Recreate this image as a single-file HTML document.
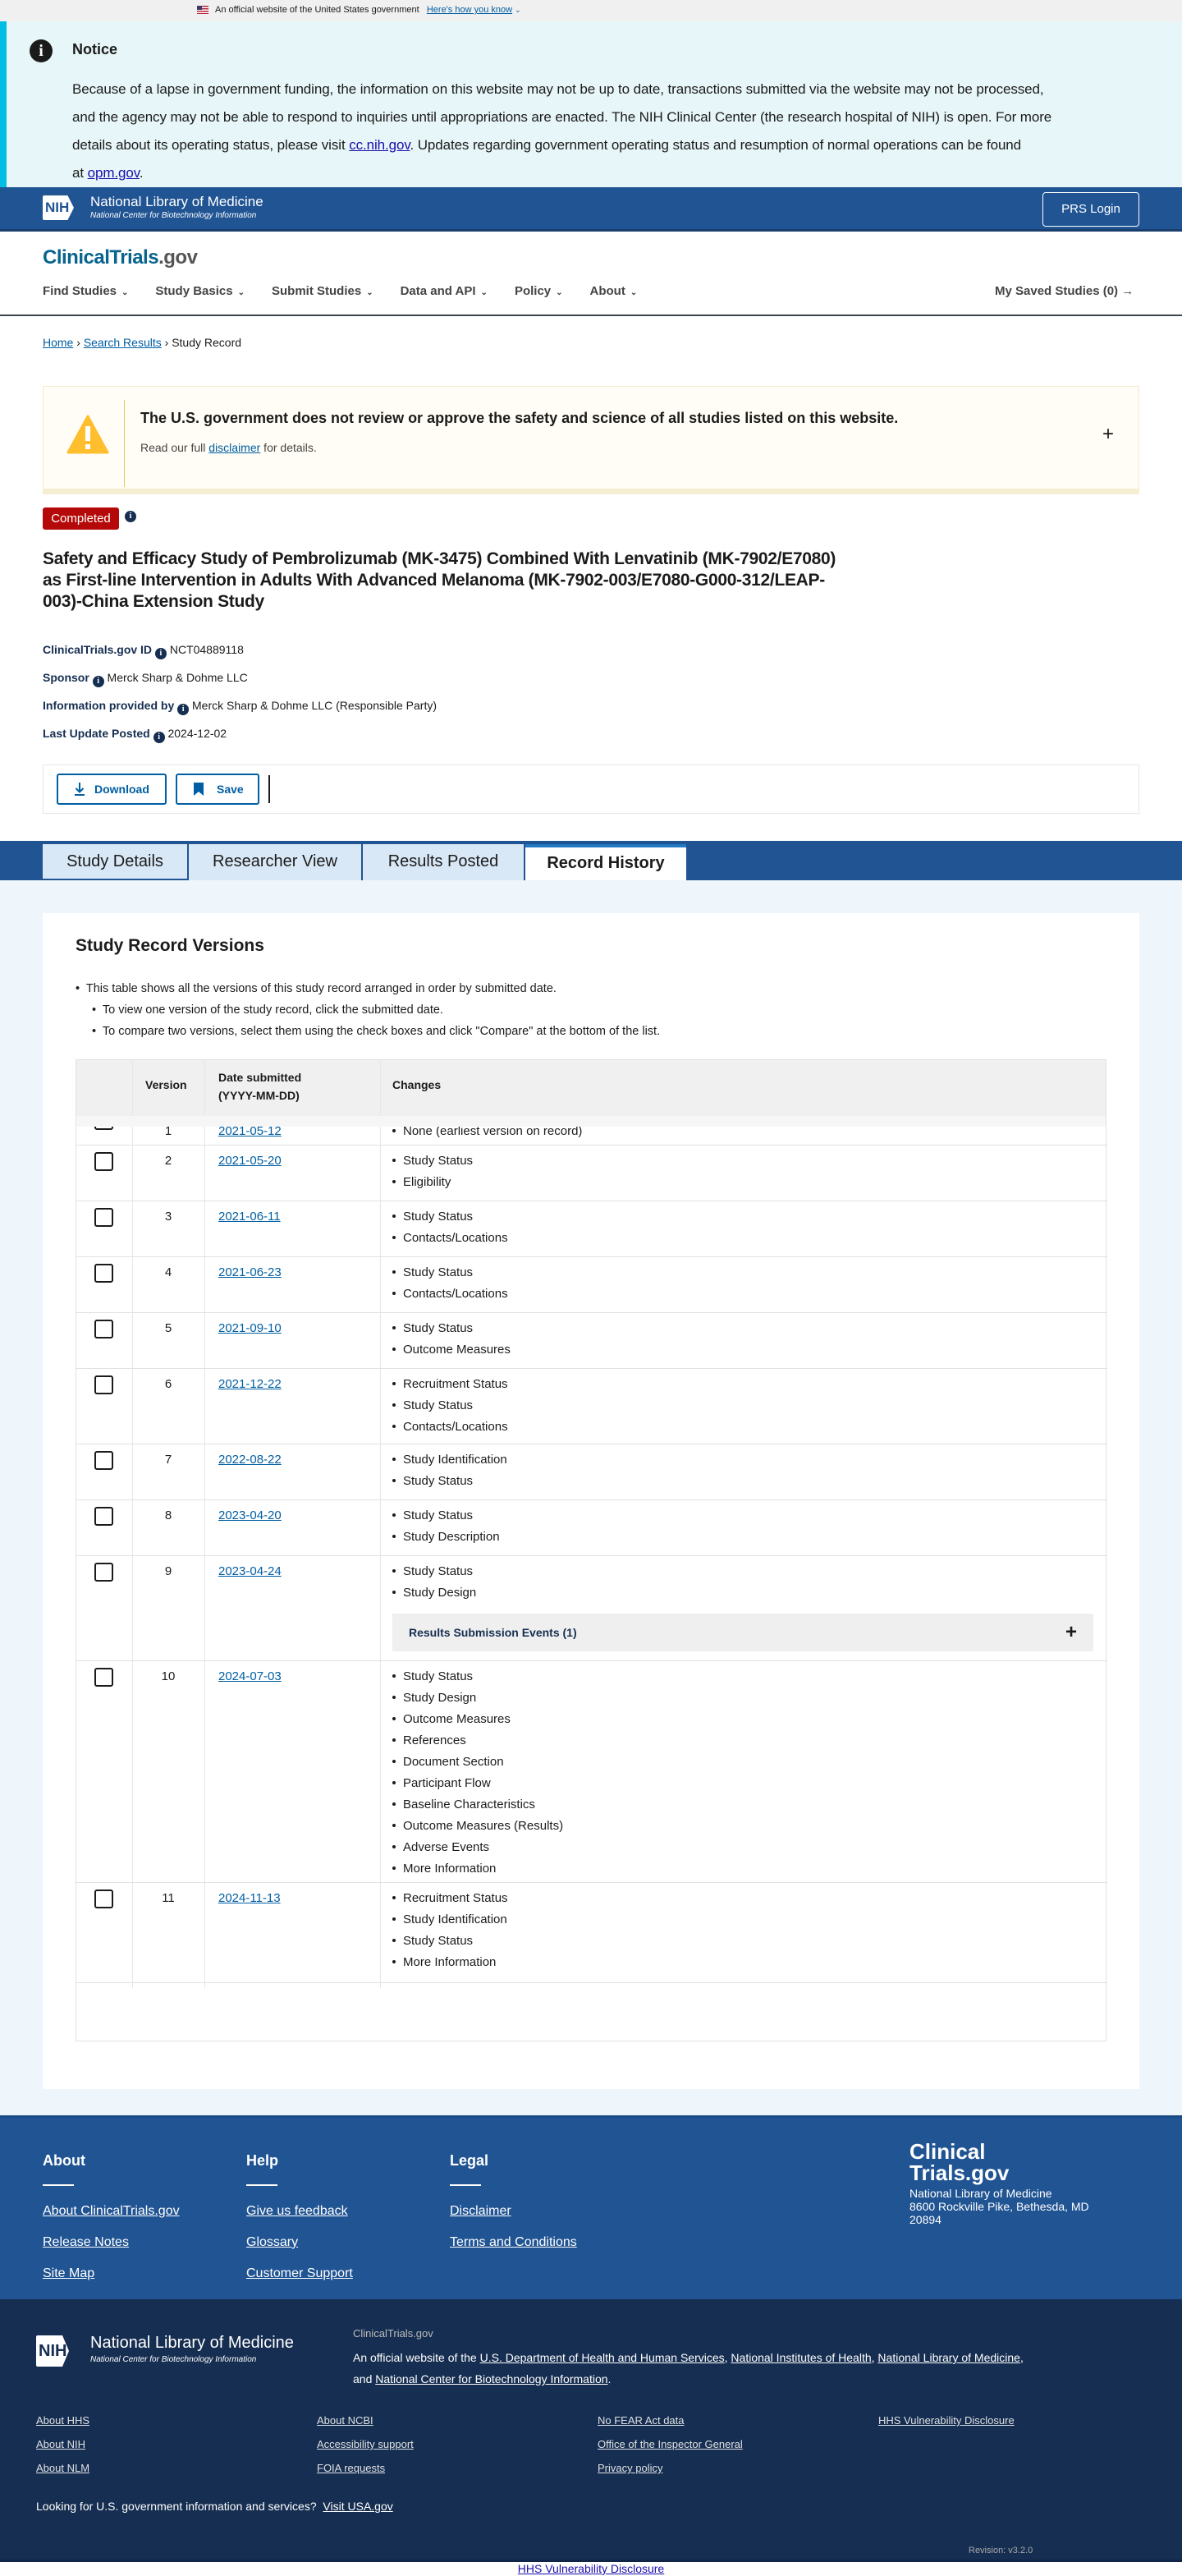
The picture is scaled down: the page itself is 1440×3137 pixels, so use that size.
<!DOCTYPE html>
<html><head><meta charset="utf-8">
<style>
*{box-sizing:border-box;margin:0;padding:0}
body{width:1440px;height:3137px;position:relative;font-family:"Liberation Sans",Arial,sans-serif;color:#1b1b1b;background:#fff;overflow:hidden}
a{color:#005ea2}
.abs{position:absolute}
.info{display:inline-block;width:14px;height:14px;border-radius:50%;background:#162e51;color:#fff;font-size:10px;font-weight:bold;text-align:center;line-height:14px;vertical-align:-2px;font-family:"Liberation Serif",serif}
.nav span{margin-right:33px}
.chev{font-size:10px;margin-left:6px}
.tbl{position:absolute;left:92px;top:1290px;width:1256px;border:1px solid #dfe1e2;}
.row{position:absolute;left:0;width:1256px;border-bottom:1px solid #dfe1e2;font-size:15px}
.row .cb{position:absolute;left:22px;top:8px;width:23px;height:23px;border:2px solid #1b1b1b;border-radius:3px;background:#fff}
.row .v{position:absolute;left:68px;width:88px;text-align:center;top:10px}
.row .d{position:absolute;left:173px;top:10px;color:#005ea2;text-decoration:underline}
.row ul{position:absolute;left:385px;top:10px;list-style:none}
.row li{height:26px;line-height:18px}
.row li:before{content:"";display:inline-block;width:4px;height:4px;background:#1b1b1b;border-radius:50%;margin:0 9px 3px 0}
.vl{position:absolute;top:0;bottom:0;width:1px;background:#e6e6e6}
.ft a{color:#fff;display:block;font-size:16px;margin-bottom:20px}
.fb a{color:#dfe1e2;display:block;font-size:13px;margin-bottom:14px}
</style></head><body>

<div class="abs" style="left:0;top:0;width:1440px;height:26px;background:#f0f0f0;font-size:11px;">
 <div class="abs" style="left:240px;top:7px;width:14px;height:10px;background:repeating-linear-gradient(#b22234 0 1.5px,#fff 1.5px 3px)"><div style="width:6px;height:5px;background:#3c3b6e"></div></div>
 <div class="abs" style="left:262px;top:6px;">An official website of the United States government&nbsp;&nbsp; <a style="color:#005ea2;text-decoration:underline">Here's how you know</a> <span style="color:#005ea2;font-size:9px">⌄</span></div>
</div>

<div class="abs" style="left:0;top:26px;width:1440px;height:202px;background:#e7f6f8;border-left:8px solid #00bde3">
 <div class="abs" style="left:28px;top:22px;width:28px;height:28px;border-radius:50%;background:#1b1b1b;color:#fff;text-align:center;font:bold 20px/28px 'Liberation Serif',serif">i</div>
 <div class="abs" style="left:80px;top:24px;font-size:18px;font-weight:bold">Notice</div>
 <div class="abs" style="left:80px;top:66px;width:1340px;font-size:17px;line-height:34px;white-space:nowrap;letter-spacing:-0.1px;color:#1b1b1b">Because of a lapse in government funding, the information on this website may not be up to date, transactions submitted via the website may not be processed,<br>and the agency may not be able to respond to inquiries until appropriations are enacted. The NIH Clinical Center (the research hospital of NIH) is open. For more<br>details about its operating status, please visit <a style="color:#1a0dab;text-decoration:underline">cc.nih.gov</a>. Updates regarding government operating status and resumption of normal operations can be found<br>at <a style="color:#1a0dab;text-decoration:underline">opm.gov</a>.</div>
</div>

<div class="abs" style="left:0;top:228px;width:1440px;height:54px;background:#205493;border-bottom:3px solid #1a3f6e;">
 <div class="abs" style="left:52px;top:10px;width:38px;height:30px;background:#fff;border-radius:2px;color:#205493;font:bold 17px/30px 'Liberation Sans';padding-left:3px;clip-path:polygon(0 0,80% 0,100% 50%,80% 100%,0 100%)">NIH</div>
 <div class="abs" style="left:110px;top:8px;color:#fff;font-size:17px;">National Library of Medicine</div>
 <div class="abs" style="left:110px;top:29px;color:#fff;font-size:10px;font-style:italic">National Center for Biotechnology Information</div>
 <div class="abs" style="left:1270px;top:6px;width:118px;height:42px;border:1px solid #fff;border-radius:4px;color:#fff;font-size:15px;text-align:center;line-height:40px">PRS Login</div>
</div>

<div class="abs" style="left:52px;top:300px;font-size:24px;font-weight:bold;color:#07648d;letter-spacing:-0.5px">ClinicalTrials<span style="color:#555;font-weight:bold">.gov</span></div>
<div class="abs nav" style="left:52px;top:346px;font-size:15px;font-weight:bold;color:#444">
 <span>Find Studies<b class="chev">⌄</b></span><span>Study Basics<b class="chev">⌄</b></span><span>Submit Studies<b class="chev">⌄</b></span><span>Data and API<b class="chev">⌄</b></span><span>Policy<b class="chev">⌄</b></span><span>About<b class="chev">⌄</b></span>
</div>
<div class="abs" style="left:1212px;top:346px;font-size:15px;font-weight:bold;color:#444">My Saved Studies (0) →</div>
<div class="abs" style="left:0;top:383px;width:1440px;height:2px;background:#3d4551"></div>

<div class="abs" style="left:52px;top:409px;font-size:14px"><a style="text-decoration:underline">Home</a> › <a style="text-decoration:underline">Search Results</a> › Study Record</div>

<div class="abs" style="left:52px;top:470px;width:1336px;height:132px;background:#fffdf5;border:1px solid #f3ecd0;border-bottom:7px solid #f5eed3">
 <svg class="abs" style="left:28px;top:34px" width="52" height="48" viewBox="0 0 52 48"><path d="M26 2 L50 46 L2 46 Z" fill="#ffbe2e" stroke="#ffbe2e" stroke-width="3" stroke-linejoin="round"/><rect x="23" y="14" width="6" height="18" fill="#fff"/><rect x="23" y="36" width="6" height="6" fill="#fff"/></svg>
 <div class="abs" style="left:98px;top:16px;width:1px;height:106px;background:#e5c85e"></div>
 <div class="abs" style="left:118px;top:28px;font-size:18px;font-weight:bold">The U.S. government does not review or approve the safety and science of all studies listed on this website.</div>
 <div class="abs" style="left:118px;top:66px;font-size:14px;color:#444">Read our full <a style="text-decoration:underline">disclaimer</a> for details.</div>
 <div class="abs" style="left:1290px;top:44px;font-size:24px">+</div>
</div>

<div class="abs" style="left:52px;top:618px;width:93px;height:27px;background:#b50909;color:#fff;border-radius:3px;font-size:15px;text-align:center;line-height:27px">Completed</div>
<span class="abs info" style="left:152px;top:622px">i</span>
<div class="abs" style="left:52px;top:668px;width:1080px;font-size:21px;font-weight:bold;line-height:26px;letter-spacing:-0.3px;color:#1b1b1b">Safety and Efficacy Study of Pembrolizumab (MK-3475) Combined With Lenvatinib (MK-7902/E7080)<br>as First-line Intervention in Adults With Advanced Melanoma (MK-7902-003/E7080-G000-312/LEAP-<br>003)-China Extension Study</div>
<div class="abs" style="left:52px;top:774px;font-size:14px;line-height:34px">
 <div><b style="color:#162e51">ClinicalTrials.gov ID</b> <span class="info">i</span> NCT04889118</div>
 <div><b style="color:#162e51">Sponsor</b> <span class="info">i</span> Merck Sharp &amp; Dohme LLC</div>
 <div><b style="color:#162e51">Information provided by</b> <span class="info">i</span> Merck Sharp &amp; Dohme LLC (Responsible Party)</div>
 <div><b style="color:#162e51">Last Update Posted</b> <span class="info">i</span> 2024-12-02</div>
</div>

<div class="abs" style="left:52px;top:931px;width:1336px;height:60px;border:1px solid #e6e6e6">
 <div class="abs" style="left:16px;top:10px;width:134px;height:38px;border:2px solid #005ea2;border-radius:3px;color:#005ea2;font-size:14px;font-weight:bold;line-height:34px;padding-left:44px">Download<svg class="abs" style="left:20px;top:9px" width="12" height="16" viewBox="0 0 12 16"><path d="M6 0V11M1.5 7L6 11.5L10.5 7M0 15H12" stroke="#005ea2" stroke-width="2" fill="none"/></svg></div>
 <div class="abs" style="left:161px;top:10px;width:102px;height:38px;border:2px solid #005ea2;border-radius:3px;color:#005ea2;font-size:14px;font-weight:bold;line-height:34px;padding-left:48px">Save<svg class="abs" style="left:20px;top:9px" width="12" height="16"><path d="M0 0H12V16L6 11L0 16Z" fill="#005ea2"/></svg></div>
 <div class="abs" style="left:274px;top:12px;width:2px;height:34px;background:#1b1b1b"></div>
</div>

<div class="abs" style="left:0;top:1024px;width:1440px;height:48px;background:#205493">
 <div class="abs" style="left:52px;top:4px;width:176px;height:44px;background:#d9e8f6;border-bottom:2px solid #205493;font-size:20px;text-align:center;line-height:42px">Study Details</div>
 <div class="abs" style="left:230px;top:4px;width:210px;height:44px;background:#d9e8f6;font-size:20px;text-align:center;line-height:42px">Researcher View</div>
 <div class="abs" style="left:442px;top:4px;width:196px;height:44px;background:#d9e8f6;font-size:20px;text-align:center;line-height:42px">Results Posted</div>
 <div class="abs" style="left:640px;top:4px;width:196px;height:46px;background:#fff;border-top:4px solid #2378c3;font-size:20px;font-weight:bold;text-align:center;line-height:38px">Record History</div>
</div>

<div class="abs" style="left:0;top:1072px;width:1440px;height:1504px;background:#eef5fb"></div>
<div class="abs" style="left:52px;top:1112px;width:1336px;height:1432px;background:#fff"></div>
<div class="abs" style="left:92px;top:1140px;font-size:21px;font-weight:bold">Study Record Versions</div>
<div class="abs" style="left:92px;top:1191px;font-size:14.5px;line-height:26px">
 <div>•&nbsp; This table shows all the versions of this study record arranged in order by submitted date.</div>
 <div style="padding-left:20px">•&nbsp; To view one version of the study record, click the submitted date.</div>
 <div style="padding-left:20px">•&nbsp; To compare two versions, select them using the check boxes and click "Compare" at the bottom of the list.</div>
</div>

<div class="tbl" style="height:1196px">
 <div class="abs" style="left:0;top:0;width:1254px;height:68px;background:#f0f0f0;font-size:14px;font-weight:bold">
  <div class="abs" style="left:84px;top:22px">Version</div>
  <div class="abs" style="left:173px;top:10px;line-height:22px">Date submitted<br>(YYYY-MM-DD)</div>
  <div class="abs" style="left:385px;top:22px">Changes</div>
 </div>
 <div class="vl" style="left:68px;top:0;height:1130px"></div>
 <div class="vl" style="left:156px;top:0;height:1130px"></div>
 <div class="vl" style="left:370px;top:0;height:1130px"></div>
 <div class="row" style="top:68px;height:36px;overflow:hidden"><div style="position:absolute;top:0;left:0;width:1254px;height:13px;background:#f6f6f6;z-index:2"></div><div class="cb" style="top:-6px"></div><div class="v" style="top:10px">1</div><div class="d" style="top:10px">2021-05-12</div><ul style="top:10px"><li>None (earliest version on record)</li></ul></div>
 <div class="row" style="top:104px;height:68px"><div class="cb"></div><div class="v">2</div><div class="d">2021-05-20</div><ul><li>Study Status</li><li>Eligibility</li></ul></div>
 <div class="row" style="top:172px;height:68px"><div class="cb"></div><div class="v">3</div><div class="d">2021-06-11</div><ul><li>Study Status</li><li>Contacts/Locations</li></ul></div>
 <div class="row" style="top:240px;height:68px"><div class="cb"></div><div class="v">4</div><div class="d">2021-06-23</div><ul><li>Study Status</li><li>Contacts/Locations</li></ul></div>
 <div class="row" style="top:308px;height:68px"><div class="cb"></div><div class="v">5</div><div class="d">2021-09-10</div><ul><li>Study Status</li><li>Outcome Measures</li></ul></div>
 <div class="row" style="top:376px;height:92px"><div class="cb"></div><div class="v">6</div><div class="d">2021-12-22</div><ul><li>Recruitment Status</li><li>Study Status</li><li>Contacts/Locations</li></ul></div>
 <div class="row" style="top:468px;height:68px"><div class="cb"></div><div class="v">7</div><div class="d">2022-08-22</div><ul><li>Study Identification</li><li>Study Status</li></ul></div>
 <div class="row" style="top:536px;height:68px"><div class="cb"></div><div class="v">8</div><div class="d">2023-04-20</div><ul><li>Study Status</li><li>Study Description</li></ul></div>
 <div class="row" style="top:604px;height:128px"><div class="cb"></div><div class="v">9</div><div class="d">2023-04-24</div><ul><li>Study Status</li><li>Study Design</li></ul>
  <div class="abs" style="left:385px;top:70px;width:854px;height:46px;background:#efefef;font-weight:bold;font-size:14px;color:#162e51;line-height:46px;padding-left:20px">Results Submission Events (1)<span class="abs" style="right:20px;top:0;font-size:24px;color:#1b1b1b">+</span></div></div>
 <div class="row" style="top:732px;height:270px"><div class="cb"></div><div class="v">10</div><div class="d">2024-07-03</div><ul><li>Study Status</li><li>Study Design</li><li>Outcome Measures</li><li>References</li><li>Document Section</li><li>Participant Flow</li><li>Baseline Characteristics</li><li>Outcome Measures (Results)</li><li>Adverse Events</li><li>More Information</li></ul></div>
 <div class="row" style="top:1002px;height:122px"><div class="cb"></div><div class="v">11</div><div class="d">2024-11-13</div><ul><li>Recruitment Status</li><li>Study Identification</li><li>Study Status</li><li>More Information</li></ul></div>
</div>

<div class="abs ft" style="left:0;top:2576px;width:1440px;height:224px;background:#205493;border-top:3px solid #1a4a85;color:#fff">
 <div class="abs" style="left:52px;top:42px"><div style="font-size:18px;font-weight:bold;margin-bottom:18px">About</div><div style="width:38px;height:2px;background:#fff;margin-bottom:22px"></div><a style="text-decoration:underline">About ClinicalTrials.gov</a><a style="text-decoration:underline">Release Notes</a><a style="text-decoration:underline">Site Map</a></div>
 <div class="abs" style="left:300px;top:42px"><div style="font-size:18px;font-weight:bold;margin-bottom:18px">Help</div><div style="width:38px;height:2px;background:#fff;margin-bottom:22px"></div><a style="text-decoration:underline">Give us feedback</a><a style="text-decoration:underline">Glossary</a><a style="text-decoration:underline">Customer Support</a></div>
 <div class="abs" style="left:548px;top:42px"><div style="font-size:18px;font-weight:bold;margin-bottom:18px">Legal</div><div style="width:38px;height:2px;background:#fff;margin-bottom:22px"></div><a style="text-decoration:underline">Disclaimer</a><a style="text-decoration:underline">Terms and Conditions</a></div>
 <div class="abs" style="left:1108px;top:28px;font-size:26px;font-weight:bold;line-height:26px">Clinical<br>Trials.gov</div>
 <div class="abs" style="left:1108px;top:84px;font-size:14px;line-height:16px;width:260px">National Library of Medicine<br>8600 Rockville Pike, Bethesda, MD<br>20894</div>
</div>

<div class="abs fb" style="left:0;top:2800px;width:1440px;height:320px;background:#162e51;border-bottom:3px solid #0f2447;color:#fff">
 <div class="abs" style="left:44px;top:44px;width:40px;height:38px;background:#fff;border-radius:2px;color:#162e51;font:bold 20px/38px 'Liberation Sans';padding-left:3px;clip-path:polygon(0 0,80% 0,100% 50%,80% 100%,0 100%)">NIH</div>
 <div class="abs" style="left:110px;top:42px;font-size:20px">National Library of Medicine</div>
 <div class="abs" style="left:110px;top:68px;font-size:10px;font-style:italic">National Center for Biotechnology Information</div>
 <div class="abs" style="left:430px;top:34px;font-size:13px;color:#bbb">ClinicalTrials.gov</div>
 <div class="abs" style="left:430px;top:58px;width:950px;font-size:14px;line-height:26px">An official website of the <u>U.S. Department of Health and Human Services</u>, <u>National Institutes of Health</u>, <u>National Library of Medicine</u>,<br>and <u>National Center for Biotechnology Information</u>.</div>
 <div class="abs" style="left:44px;top:140px"><a style="text-decoration:underline">About HHS</a><a style="text-decoration:underline">About NIH</a><a style="text-decoration:underline">About NLM</a></div>
 <div class="abs" style="left:386px;top:140px"><a style="text-decoration:underline">About NCBI</a><a style="text-decoration:underline">Accessibility support</a><a style="text-decoration:underline">FOIA requests</a></div>
 <div class="abs" style="left:728px;top:140px"><a style="text-decoration:underline">No FEAR Act data</a><a style="text-decoration:underline">Office of the Inspector General</a><a style="text-decoration:underline">Privacy policy</a></div>
 <div class="abs" style="left:1070px;top:140px"><a style="text-decoration:underline">HHS Vulnerability Disclosure</a></div>
 <div class="abs" style="left:44px;top:244px;font-size:14px">Looking for U.S. government information and services?&nbsp; <u>Visit USA.gov</u></div>
 <div class="abs" style="left:1180px;top:300px;font-size:11px;color:#aaa">Revision: v3.2.0</div>
</div>
<div class="abs" style="left:0;top:3120px;width:1440px;text-align:center;font-size:14px"><a style="color:#1a0dab;text-decoration:underline">HHS Vulnerability Disclosure</a></div>
</body></html>
